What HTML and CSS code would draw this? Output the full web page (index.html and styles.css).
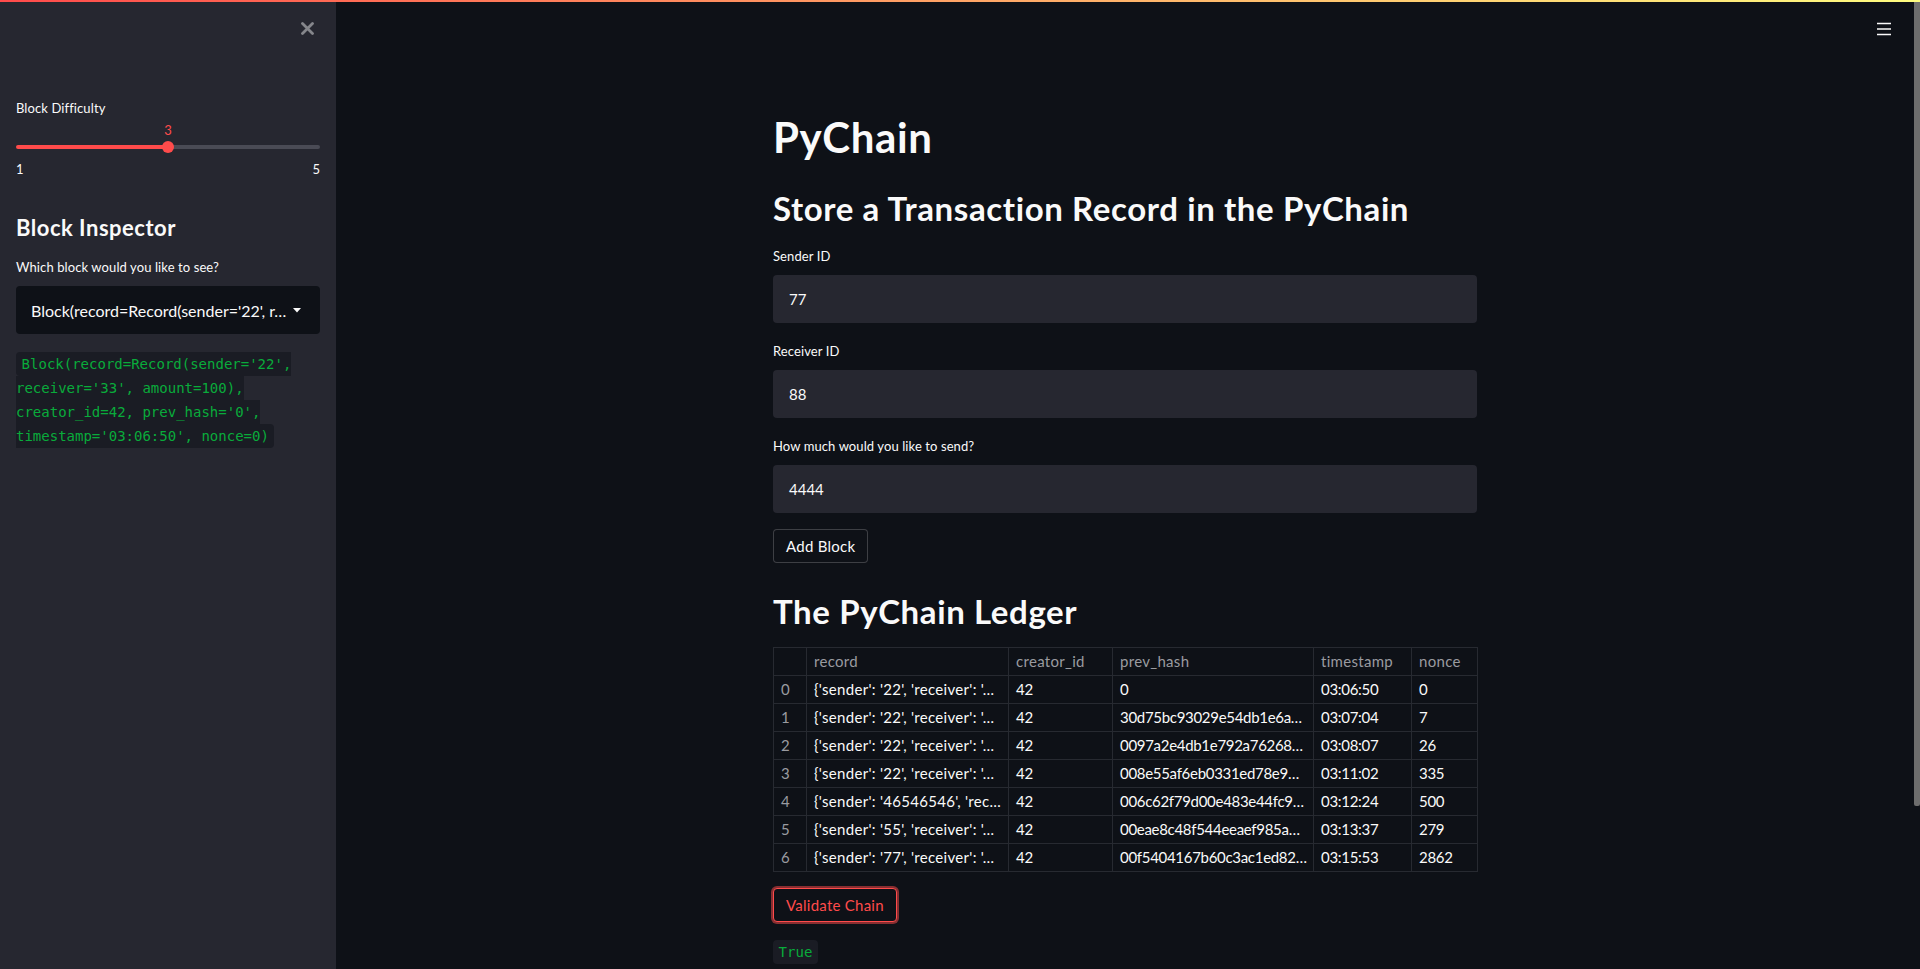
FILE: index.html
```html
<!DOCTYPE html>
<html lang="en">
<head>
<meta charset="utf-8">
<title>PyChain</title>
<link rel="stylesheet" href="styles.css">
</head>
<body>
<div class="app">
  <div class="decoration"></div>
  <aside class="sidebar">
    <div class="sb-head">
      <svg class="close-icon" width="13" height="13" viewBox="0 0 13 13"><path d="M1.5 1.5 L11.5 11.5 M11.5 1.5 L1.5 11.5" stroke="#85868b" stroke-width="2.8" stroke-linecap="round"/></svg>
    </div>
    <div class="label sb-label">Block Difficulty</div>
    <div class="slider">
      <div class="slider-value-row"><span class="slider-value">3</span></div>
      <div class="track">
        <div class="track-fill"></div>
        <div class="thumb-dot"></div>
        <div class="track-rest"></div>
      </div>
      <div class="ticks"><span>1</span><span>5</span></div>
    </div>
    <h3 class="sb-header">Block Inspector</h3>
    <div class="label sb-q">Which block would you like to see?</div>
    <div class="select">
      <span class="select-text">Block(record=Record(sender='22', r…</span>
      <svg class="caret" width="8" height="5" viewBox="0 0 8 5"><path d="M0 0 L8 0 L4 4.5 Z" fill="#fafafa"/></svg>
    </div>
    <p class="code-para"><code class="code">Block(record=Record(sender='22', receiver='33', amount=100), creator_id=42, prev_hash='0', timestamp='03:06:50', nonce=0)</code></p>
  </aside>
  <main class="main">
    <div class="top-menu">
      <svg width="14" height="14" viewBox="0 0 14 14"><path d="M0 1.5 H14 M0 7 H14 M0 12.5 H14" stroke="#fafafa" stroke-width="1.6"/></svg>
    </div>
    <div class="container">
      <h1 class="title">PyChain</h1>
      <h2 class="h2 first">Store a Transaction Record in the PyChain</h2>
      <div class="field">
        <div class="label">Sender ID</div>
        <div class="input">77</div>
      </div>
      <div class="field">
        <div class="label">Receiver ID</div>
        <div class="input">88</div>
      </div>
      <div class="field">
        <div class="label">How much would you like to send?</div>
        <div class="input">4444</div>
      </div>
      <button class="btn add">Add Block</button>
      <h2 class="h2 ledger">The PyChain Ledger</h2>
      <table class="grid">
        <colgroup>
          <col style="width:33px"><col style="width:202px"><col style="width:104px"><col style="width:201px"><col style="width:98px"><col style="width:66px">
        </colgroup>
        <thead>
          <tr><th></th><th>record</th><th>creator_id</th><th>prev_hash</th><th>timestamp</th><th>nonce</th></tr>
        </thead>
        <tbody>
          <tr><td class="idx">0</td><td>{'sender': '22', 'receiver': '…</td><td class="num">42</td><td class="num">0</td><td class="num">03:06:50</td><td class="num">0</td></tr>
          <tr><td class="idx">1</td><td>{'sender': '22', 'receiver': '…</td><td class="num">42</td><td class="num">30d75bc93029e54db1e6a…</td><td class="num">03:07:04</td><td class="num">7</td></tr>
          <tr><td class="idx">2</td><td>{'sender': '22', 'receiver': '…</td><td class="num">42</td><td class="num">0097a2e4db1e792a76268…</td><td class="num">03:08:07</td><td class="num">26</td></tr>
          <tr><td class="idx">3</td><td>{'sender': '22', 'receiver': '…</td><td class="num">42</td><td class="num">008e55af6eb0331ed78e9…</td><td class="num">03:11:02</td><td class="num">335</td></tr>
          <tr><td class="idx">4</td><td>{'sender': '46546546', 'rec…</td><td class="num">42</td><td class="num">006c62f79d00e483e44fc9…</td><td class="num">03:12:24</td><td class="num">500</td></tr>
          <tr><td class="idx">5</td><td>{'sender': '55', 'receiver': '…</td><td class="num">42</td><td class="num">00eae8c48f544eeaef985a…</td><td class="num">03:13:37</td><td class="num">279</td></tr>
          <tr><td class="idx">6</td><td>{'sender': '77', 'receiver': '…</td><td class="num">42</td><td class="num">00f5404167b60c3ac1ed82…</td><td class="num">03:15:53</td><td class="num">2862</td></tr>
        </tbody>
      </table>
      <button class="btn validate">Validate Chain</button>
      <div class="result"><code class="code true">True</code></div>
    </div>
    <div class="scrollbar"><div class="sb-thumb"></div></div>
  </main>
</div>
</body>
</html>
```
FILE: styles.css
```css
* { box-sizing: border-box; margin: 0; padding: 0; }
html, body { height: 100%; }
body {
  background: #0e1117;
  color: #fafafa;
  font-family: Lato, "Noto Sans", sans-serif;
  overflow: hidden;
}
.app { display: flex; height: 969px; position: relative; }
.decoration {
  position: absolute; top: 0; left: 0; right: 0; height: 2px; z-index: 5;
  background: linear-gradient(90deg, #ff4b4b, #fffd80);
}

/* Sidebar */
.sidebar { width: 336px; flex: none; background: #262730; padding: 0 16px; }
.sb-head { height: 56px; display: flex; align-items: center; justify-content: flex-end; padding-right: 6px; }
.close-icon { display: block; }
.label { font-size: 13px; line-height: 20px; letter-spacing: 0.1px; color: #fafafa; }
.sb-label { margin-top: 42px; }
.slider { margin-top: 1px; }
.slider-value-row { height: 20px; position: relative; }
.slider-value {
  position: absolute; left: 50%; top: 1px; transform: translateX(-50%);
  font-size: 13px; line-height: 20px; color: #ff4b4b;
}
.track { margin-top: 2px; height: 12px; display: flex; align-items: center; }
.track-fill { flex: 1; height: 4px; background: #ff4b4b; border-radius: 2px 0 0 2px; }
.thumb-dot { width: 12px; height: 12px; border-radius: 50%; background: #ff4b4b; margin: 0 -6px; position: relative; z-index: 1; }
.track-rest { flex: 1; height: 4px; background: #4a4b55; border-radius: 0 2px 2px 0; }
.ticks { margin-top: 6px; display: flex; justify-content: space-between; font-size: 13px; line-height: 20px; }
.sb-header {
  margin-top: 32px; padding-top: 2px; font-size: 22px; line-height: 30px;
  font-weight: 700; letter-spacing: 0.5px;
}
.sb-q { margin-top: 14px; }
.select {
  margin-top: 9px; height: 48px; background: #0e1117; border-radius: 4px;
  display: flex; align-items: center; justify-content: space-between;
  padding: 0 19px 0 15px; font-size: 16px;
}
.select-text { white-space: nowrap; }
.caret { display: block; }
.code-para { margin-top: 18px; line-height: 24px; font-size: 14px; }
.code {
  font-family: "DejaVu Sans Mono", "Liberation Mono", monospace;
  font-size: 14px; color: #09ab3b; background: #1a1c24;
  padding: 4px 5.6px; border-radius: 4px;
}

/* Main */
.main { flex: 1; display: flex; justify-content: center; position: relative; }
.top-menu { position: absolute; top: 22px; right: 29px; width: 14px; height: 14px; }
.top-menu svg { display: block; }
.container { width: 704px; padding-top: 110px; margin-left: auto; margin-right: auto; }
.title {
  font-size: 42px; padding-top: 2px; line-height: 50px; font-weight: 700; letter-spacing: 0.6px;
}
.h2 {
  font-size: 33px; padding-top: 5px; line-height: 39px; font-weight: 700; letter-spacing: 0.6px;
}
.h2.first { margin-top: 22px; }
.field { margin-top: 18px; }
.input {
  margin-top: 9px; height: 48px; background: #262730; border-radius: 4px;
  display: flex; align-items: center; padding: 0 16px; font-size: 15px;
}
.btn {
  display: flex; align-items: center; height: 34px; padding: 0 12px;
  background: #0e1117; color: #fafafa; font-family: inherit; font-size: 15px;
  letter-spacing: 0.25px;
  border: 1px solid rgba(250, 250, 250, 0.2); border-radius: 4px;
}
.btn.add { margin-top: 16px; }
.h2.ledger { margin-top: 24px; }
.grid {
  margin-top: 16px; width: 704px; table-layout: fixed; border-collapse: collapse;
  font-size: 15px;
}
.grid th, .grid td {
  border: 1px solid #272a31; height: 28px; line-height: 27px; padding: 0 7px;
  text-align: left; white-space: nowrap; overflow: hidden; font-weight: 400;
  letter-spacing: 0.3px;
}
.grid th { color: #9a9ba0; }
.grid td { color: #fafafa; }
.grid td.idx { color: #9a9ba0; }
.grid td.num { letter-spacing: -0.3px; }
.btn.validate {
  margin-top: 16px; color: #ff4b4b; border-color: #ff4b4b;
  box-shadow: 0 0 0 2px rgba(255, 75, 75, 0.5);
}
.result { margin-top: 17px; line-height: 24px; }
.code.true { display: inline-block; line-height: 16px; padding: 4px 5.6px; }
.scrollbar { width: 6px; flex: none; }
.sb-thumb { margin-top: 2px; height: 804px; background: #6d6d6d; border-radius: 0 0 2px 2px; }
```
